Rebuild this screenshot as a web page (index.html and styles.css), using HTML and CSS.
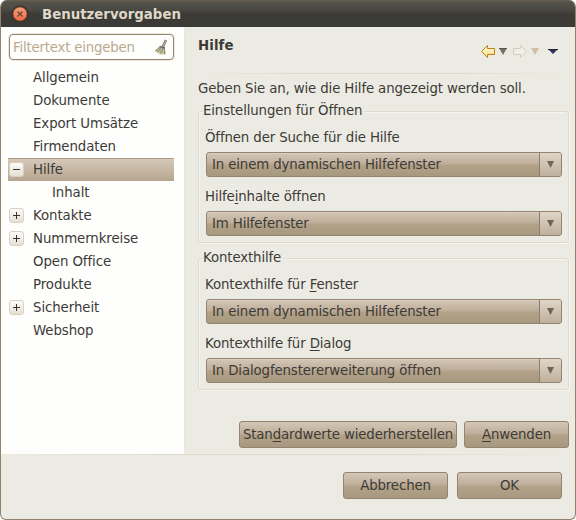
FILE: index.html
```html
<!DOCTYPE html>
<html lang="de">
<head>
<meta charset="utf-8">
<title>Benutzervorgaben</title>
<link rel="stylesheet" href="styles.css">
</head>
<body>
<div class="window">
  <header class="titlebar">
    <svg class="close" width="18" height="18" viewBox="0 0 18 18">
      <defs><linearGradient id="orange" x1="0" y1="0" x2="0" y2="1"><stop offset="0" stop-color="#f5a283"/><stop offset="1" stop-color="#ea6a40"/></linearGradient></defs>
      <circle cx="9" cy="9" r="8.5" fill="#34332e"/>
      <circle cx="9" cy="9" r="7" fill="url(#orange)" stroke="#8b3f25" stroke-width=".7"/>
      <path d="M6.500 6.500l5 5m0-5l-5 5" stroke="#6b4030" stroke-width="1.200"/>
    </svg>
    <span>Benutzervorgaben</span>
  </header>
  <div class="main">
    <aside class="sidebar">
      <div class="filter"><span>Filtertext eingeben</span>
        <svg width="14" height="17" viewBox="0 0 14 17">
          <path d="M12 1L9 7.500" stroke="#77766a" stroke-width="2.600"/>
          <path d="M12 1.500L9.500 6.500" stroke="#c9c6b6"/>
          <path d="M5.500 7.500l5.500 1.500 1 6.500H6L.5 12z" fill="#cfcba6"/>
          <path d="M5 8.500l-3.500 3.500M7 8.500l-3.500 5M9 9l-2.500 6M10.500 9.500v6M2.500 11l9 3M4 9l7 2.500" stroke="#727060" stroke-dasharray="1 1"/>
          <path d="M5.500 7.500l5.500 1.500" stroke="#66665a" stroke-width="1.500"/>
        </svg>
      </div>
      <ul class="tree">
        <li>Allgemein</li>
        <li>Dokumente</li>
        <li>Export Umsätze</li>
        <li>Firmendaten</li>
        <li class="selected"><i class="toggle minus"></i>Hilfe</li>
        <li class="child">Inhalt</li>
        <li><i class="toggle plus"></i>Kontakte</li>
        <li><i class="toggle plus"></i>Nummernkreise</li>
        <li>Open Office</li>
        <li>Produkte</li>
        <li><i class="toggle plus"></i>Sicherheit</li>
        <li>Webshop</li>
      </ul>
    </aside>
    <main class="content">
      <div class="heading">
        <h1>Hilfe</h1>
        <svg width="80" height="14" viewBox="0 0 80 14">
          <defs><linearGradient id="gold" x1="0" y1="0" x2="0" y2="1"><stop offset="0" stop-color="#fffbe0"/><stop offset="1" stop-color="#f6dc7c"/></linearGradient></defs>
          <path d="M.5 6.500L6.500.5v3h7v6h-7v3z" fill="url(#gold)" stroke="#b98318"/>
          <path d="M18 3h8l-4 7z" fill="#77705f"/>
          <path d="M18 3.500h8" stroke="#5a574d"/>
          <path d="M45.500 6.500L39.500.5v3h-7v6h7v3z" fill="#f1eee6" stroke="#d3cdc1"/>
          <path d="M50 3h8l-4 7z" fill="#d0bea3"/>
          <path d="M67 4h10l-5 5z" fill="#34315f"/>
          <path d="M67 4.500h10" stroke="#22222c"/>
        </svg>
      </div>
      <p class="intro">Geben Sie an, wie die Hilfe angezeigt werden soll.</p>
      <section class="group">
        <h2>Einstellungen für Öffnen</h2>
        <label>Öffnen der Suche für die Hilfe</label>
        <div class="combo"><span>In einem dynamischen Hilfefenster</span><b><i></i></b></div>
        <label>Hilfe<u>i</u>nhalte öffnen</label>
        <div class="combo"><span>Im Hilfefenster</span><b><i></i></b></div>
      </section>
      <section class="group">
        <h2>Kontexthilfe</h2>
        <label>Kontexthilfe für <u>F</u>enster</label>
        <div class="combo"><span>In einem dynamischen Hilfefenster</span><b><i></i></b></div>
        <label>Kontexthilfe für <u>D</u>ialog</label>
        <div class="combo"><span>In Dialogfenstererweiterung öffnen</span><b><i></i></b></div>
      </section>
      <div class="actions">
        <button class="wide">Stan<u>d</u>ardwerte wiederherstellen</button>
        <button><u>A</u>nwenden</button>
      </div>
    </main>
  </div>
  <footer class="footer">
    <button>Abbrechen</button>
    <button>OK</button>
  </footer>
</div>
</body>
</html>
```
FILE: styles.css
```css
* { box-sizing: border-box; }
body {
  margin: 0;
  background: #fff;
  font: 13.333px/17px "DejaVu Sans", sans-serif;
  letter-spacing: -0.13px;
  color: #3c3b37;
}
.window {
  width: 576px;
  height: 520px;
  display: flex;
  flex-direction: column;
  border: 1px solid #92816a;
  border-top: 0;
  border-radius: 7px 7px 6px 6px;
  background: #ecebe3;
  overflow: hidden;
}
.titlebar {
  height: 27px;
  flex: none;
  display: flex;
  align-items: center;
  gap: 13px;
  padding: 1px 0 0 10px;
  background: linear-gradient(#6b6152 0, #565349 2px, #4b4a43 9px, #3c3b37 14px, #3a3a36 100%);
  color: #dfd8c8;
  font-weight: bold;
  letter-spacing: 0;
}
.close { display: block; }
.main { display: flex; height: 427px; flex: none; }
.sidebar {
  width: 184px;
  background: #fefefd;
  border-right: 1px solid #e9e7dd;
  padding: 7px 10px 0 7px;
}
.filter {
  display: flex;
  justify-content: space-between;
  align-items: center;
  height: 26px;
  margin: 0 0 0 1px;
  padding: 0 5px 0 3px;
  color: #bba98e;
  white-space: nowrap;
  border: 1px solid #95826a;
  border-radius: 4px;
  box-shadow: 0 0 0 1px #ece9df;
  letter-spacing: -0.2px;
}
.tree { list-style: none; margin: 6px 0 0; padding: 0; letter-spacing: -0.08px; }
.tree li {
  height: 23px;
  line-height: 23px;
  display: grid;
  grid-template-columns: 1fr;
  align-items: center;
  padding-left: 25px;
}
.tree li:has(.toggle) { grid-template-columns: 15px 1fr; column-gap: 9px; padding-left: 1px; }
.tree .child { padding-left: 44px; }
.tree .selected {
  background: linear-gradient(#d7cabb, #b6a690);
  box-shadow: inset 0 1px #ad9b84;
}
.toggle {
  width: 15px;
  height: 15px;
  border: 1px solid #d9d0c1;
  border-radius: 3px;
  background:
    linear-gradient(#333, #333) center / 7px 1px no-repeat,
    linear-gradient(#fdfcfa, #e6dfd3);
}
.plus {
  background:
    linear-gradient(#333, #333) center / 7px 1px no-repeat,
    linear-gradient(#333, #333) center / 1px 7px no-repeat,
    linear-gradient(#fdfcfa, #e6dfd3);
}
.content { width: 390px; padding: 0 6px 0 13px; }
.heading {
  height: 47px;
  display: flex;
  justify-content: space-between;
  padding: 10px 10px 0 0;
  border-bottom: 1px solid;
  border-image: linear-gradient(90deg, #ecebe3, #dfdbce 25%, #dfdbce 70%, #ecebe3) 1;
}
.heading svg { margin: 8px -2px 0 0; }
h1 { font-size: 13.333px; line-height: 17px; margin: 0; letter-spacing: 0.1px; }
.intro { margin: 6px 0 0; }
.group {
  height: 132px;
  margin-top: 14px;
  padding: 0 6px 0 7px;
  border: 1px solid #dedacd;
  border-radius: 3px;
  box-shadow: inset 1px 1px #f5f4ee, 1px 1px #f5f4ee;
}
.group + .group { margin-top: 15px; }
.group h2 {
  width: fit-content;
  font-size: inherit;
  line-height: 17px;
  font-weight: normal;
  margin: -10px 0 0 -3px;
  padding-right: 2px;
  background: #ecebe3;
}
.group label { display: block; margin: 10px 0 6px -1px; }
.combo + label { margin-top: 11px; }
.combo {
  height: 25px;
  display: flex;
  border: 1px solid #93836f;
  border-radius: 3px;
  background: linear-gradient(#d4c7b7, #bfae9a 46%, #b2a287 54%, #a79881);
  overflow: hidden;
  box-shadow: inset 0 1px #dacfc1;
}
.combo span { flex: 1; padding: 3px 0 0 5px; }
.combo b {
  width: 22px;
  border-left: 1px solid #8d7e69;
  background: linear-gradient(#dfd5c8, #beb09c);
  display: grid;
  place-items: center;
}
.combo i {
  width: 7px;
  height: 7px;
  background: #6b665a;
  clip-path: polygon(0 0, 100% 0, 50% 100%);
}
.actions { display: flex; justify-content: flex-end; gap: 7px; margin-top: 31px; }
button {
  width: 105px;
  height: 27px;
  padding: 0;
  font: inherit;
  letter-spacing: inherit;
  color: inherit;
  border: 1px solid #93836f;
  border-radius: 3px;
  background: linear-gradient(#d4c7b7, #bfae9a 46%, #b2a287 54%, #a79881);
}
button.wide { width: 218px; }
u { text-underline-offset: 2px; text-decoration-thickness: 1px; }
.footer {
  flex: 1;
  display: flex;
  justify-content: flex-end;
  gap: 9px;
  padding: 17px 13px 0 0;
  border-top: 1px solid;
  border-image: linear-gradient(90deg, #ecebe3, #dedbce 30%, #dedbce 70%, #ecebe3) 1;
}
```
